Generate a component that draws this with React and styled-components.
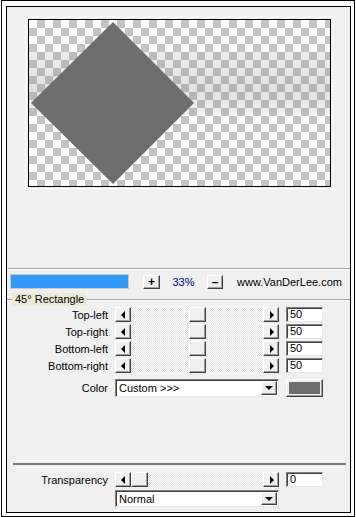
import React from 'react';
import styled, { createGlobalStyle, css } from 'styled-components';

const GlobalStyle = createGlobalStyle`
  html, body {
    margin: 0;
    padding: 0;
    background: #fff;
  }
  body {
    font-family: "Liberation Sans", Arial, sans-serif;
    font-size: 11px;
    color: #000;
  }
`;

const raised = css`
  box-sizing: border-box;
  background: #f0f0f0;
  border: 1px solid;
  border-color: #fff #404040 #404040 #fff;
  box-shadow: inset -1px -1px #a0a0a0;
`;

const sunken = css`
  box-sizing: border-box;
  background: #fff;
  border: 1px solid;
  border-color: #808080 #e8e8e8 #e8e8e8 #808080;
  box-shadow: inset 1px 1px #404040;
`;

const Frame = styled.div`
  box-sizing: border-box;
  width: 354px;
  height: 517px;
  margin-left: 1px;
  border: 1px solid #000;
  padding: 5px 3px 3px 4px;
  background: #fff;
`;

const Panel = styled.div`
  box-sizing: border-box;
  height: 100%;
  border: 1px solid #000;
  background: #f0f0f0;
  display: flex;
  flex-direction: column;
`;

const PreviewArea = styled.div`
  box-sizing: border-box;
  height: 261px;
  padding: 9px 0 0 18px;
`;

const PreviewBevel = styled.div`
  width: fit-content;
  border: 1px solid #fafafa;
  padding: 2px;
`;

const Canvas = styled.div`
  width: 301px;
  height: 166px;
  border: 1px solid #000;
  background-color: #fff;
  background-image: repeating-conic-gradient(#c3c3c3 0 25%, #fff 0 50%);
  background-size: 16px 16px;
  svg {
    display: block;
  }
`;

const Separator = styled.div`
  margin-left: 1px;
  border-top: 1px solid #a0a0a0;
  border-bottom: 1px solid #fff;
`;

const Toolbar = styled.div`
  display: flex;
  align-items: center;
  height: 15px;
  margin-top: 4px;
  padding-left: 3px;
`;

const Progress = styled.div`
  box-sizing: border-box;
  width: 119px;
  height: 15px;
  border: 1px solid #c8c8c8;
  background: #3399f8;
`;

const ZoomButton = styled.div`
  ${raised}
  width: ${(p) => p.w}px;
  height: 14px;
  margin-left: ${(p) => p.gap || 0}px;
  display: flex;
  align-items: center;
  justify-content: center;
  font-size: 12px;
  font-weight: bold;
  line-height: 1;
`;

const Percent = styled.span`
  width: 47px;
  text-align: center;
  color: #000080;
`;

const Site = styled.span`
  margin-left: 14px;
`;

const Group = styled.div`
  margin-top: 4px;
`;

const GroupHeader = styled.div`
  display: flex;
  align-items: center;
  height: 13px;
`;

const GroupLine = styled.div`
  flex: ${(p) => (p.grow ? 1 : 'none')};
  width: ${(p) => (p.grow ? 'auto' : '5px')};
  border-top: 1px solid #a0a0a0;
  border-bottom: 1px solid #fff;
`;

const GroupTitle = styled.span`
  background: #ece9d8;
  padding: 0 3px;
  line-height: 13px;
`;

const Rows = styled.div`
  display: grid;
  grid-template-columns: 101px 164px 37px;
  grid-auto-rows: 15px;
  column-gap: 7px;
  row-gap: 2px;
  margin-top: 1px;
`;

const FormRow = styled.div`
  display: grid;
  grid-template-columns: 101px 164px 37px;
  column-gap: 7px;
  height: ${(p) => p.h}px;
  margin-top: ${(p) => p.top}px;
`;

const Label = styled.span`
  text-align: right;
  align-self: center;
  white-space: nowrap;
`;

const SliderBox = styled.div`
  display: flex;
  height: 15px;
`;

const ArrowButton = styled.div`
  ${raised}
  width: 16px;
  height: 15px;
  flex: none;
  display: flex;
  align-items: center;
  justify-content: center;
`;

const Arrow = styled.span`
  width: 0;
  height: 0;
  border-top: 4px solid transparent;
  border-bottom: 4px solid transparent;
  ${(p) => (p.dir === 'left'
    ? 'border-right: 4px solid #000; margin-left: -1px;'
    : 'border-left: 4px solid #000; margin-left: 1px;')}
`;

const Track = styled.div`
  flex: 1;
  display: flex;
  background-image: repeating-conic-gradient(#fff 0 25%, #e2e2e2 0 50%);
  background-size: 2px 2px;
`;

const Thumb = styled.div`
  ${raised}
  width: 17px;
  height: 15px;
  flex: none;
`;

const NumberBox = styled.div`
  ${sunken}
  height: 15px;
  padding-left: 3px;
  line-height: 13px;
`;

const Combo = styled.div`
  ${sunken}
  grid-column: 2;
  display: flex;
  align-items: stretch;
  justify-content: space-between;
  padding: 1px 1px 1px 3px;
`;

const ComboText = styled.span`
  align-self: center;
`;

const ComboButton = styled.div`
  ${raised}
  width: 16px;
  display: flex;
  align-items: center;
  justify-content: center;
`;

const DownArrow = styled.span`
  width: 0;
  height: 0;
  border-left: 4px solid transparent;
  border-right: 4px solid transparent;
  border-top: 4px solid #000;
`;

const Swatch = styled.div`
  ${raised}
  padding: 2px;
  div {
    height: 100%;
    background: ${(p) => p.color};
  }
`;

const Bottom = styled.div`
  margin-top: auto;
  padding-bottom: 5px;
`;

const BottomSeparator = styled.div`
  height: 2px;
  margin: 0 4px 0 6px;
  background: #777;
`;

const Slider = ({ value }) => (
  <SliderBox>
    <ArrowButton><Arrow dir="left" /></ArrowButton>
    <Track>
      <div style={{ width: `${(115 * value) / 100}px`, flex: 'none' }} />
      <Thumb />
    </Track>
    <ArrowButton><Arrow dir="right" /></ArrowButton>
  </SliderBox>
);

const corners = [
  ['Top-left', 50],
  ['Top-right', 50],
  ['Bottom-left', 50],
  ['Bottom-right', 50],
];

const Preview = () => (
  <svg width="301" height="166" viewBox="0 0 301 166">
    <defs>
      <linearGradient id="band" x1="0" y1="0" x2="0" y2="1">
        <stop offset="0" stopColor="#9a9a9a" stopOpacity="0.18" />
        <stop offset="0.6" stopColor="#8a8a8a" stopOpacity="0.26" />
        <stop offset="1" stopColor="#9a9a9a" stopOpacity="0.14" />
      </linearGradient>
    </defs>
    <rect x="0" y="32" width="301" height="63" fill="url(#band)" />
    <polygon points="84,2 165,83 84,164 2,83" fill="#6e6e6e" />
  </svg>
);

export default function App() {
  return (
    <>
      <GlobalStyle />
      <Frame>
        <Panel>
          <PreviewArea>
            <PreviewBevel>
              <Canvas>
                <Preview />
              </Canvas>
            </PreviewBevel>
          </PreviewArea>
          <Separator />
          <Toolbar>
            <Progress />
            <ZoomButton w={17} gap={14}>+</ZoomButton>
            <Percent>33%</Percent>
            <ZoomButton w={16}>–</ZoomButton>
            <Site>www.VanDerLee.com</Site>
          </Toolbar>
          <Group>
            <GroupHeader>
              <GroupLine />
              <GroupTitle>45° Rectangle</GroupTitle>
              <GroupLine grow />
            </GroupHeader>
            <Rows>
              {corners.map(([name, value]) => (
                <React.Fragment key={name}>
                  <Label>{name}</Label>
                  <Slider value={value} />
                  <NumberBox>{value}</NumberBox>
                </React.Fragment>
              ))}
            </Rows>
            <FormRow h={18} top={6}>
              <Label>Color</Label>
              <Combo>
                <ComboText>Custom &gt;&gt;&gt;</ComboText>
                <ComboButton><DownArrow /></ComboButton>
              </Combo>
              <Swatch color="#6e6e6e"><div /></Swatch>
            </FormRow>
          </Group>
          <Bottom>
            <BottomSeparator />
            <FormRow h={15} top={7}>
              <Label>Transparency</Label>
              <Slider value={0} />
              <NumberBox>0</NumberBox>
            </FormRow>
            <FormRow h={17} top={3}>
              <Combo>
                <ComboText>Normal</ComboText>
                <ComboButton><DownArrow /></ComboButton>
              </Combo>
            </FormRow>
          </Bottom>
        </Panel>
      </Frame>
    </>
  );
}
